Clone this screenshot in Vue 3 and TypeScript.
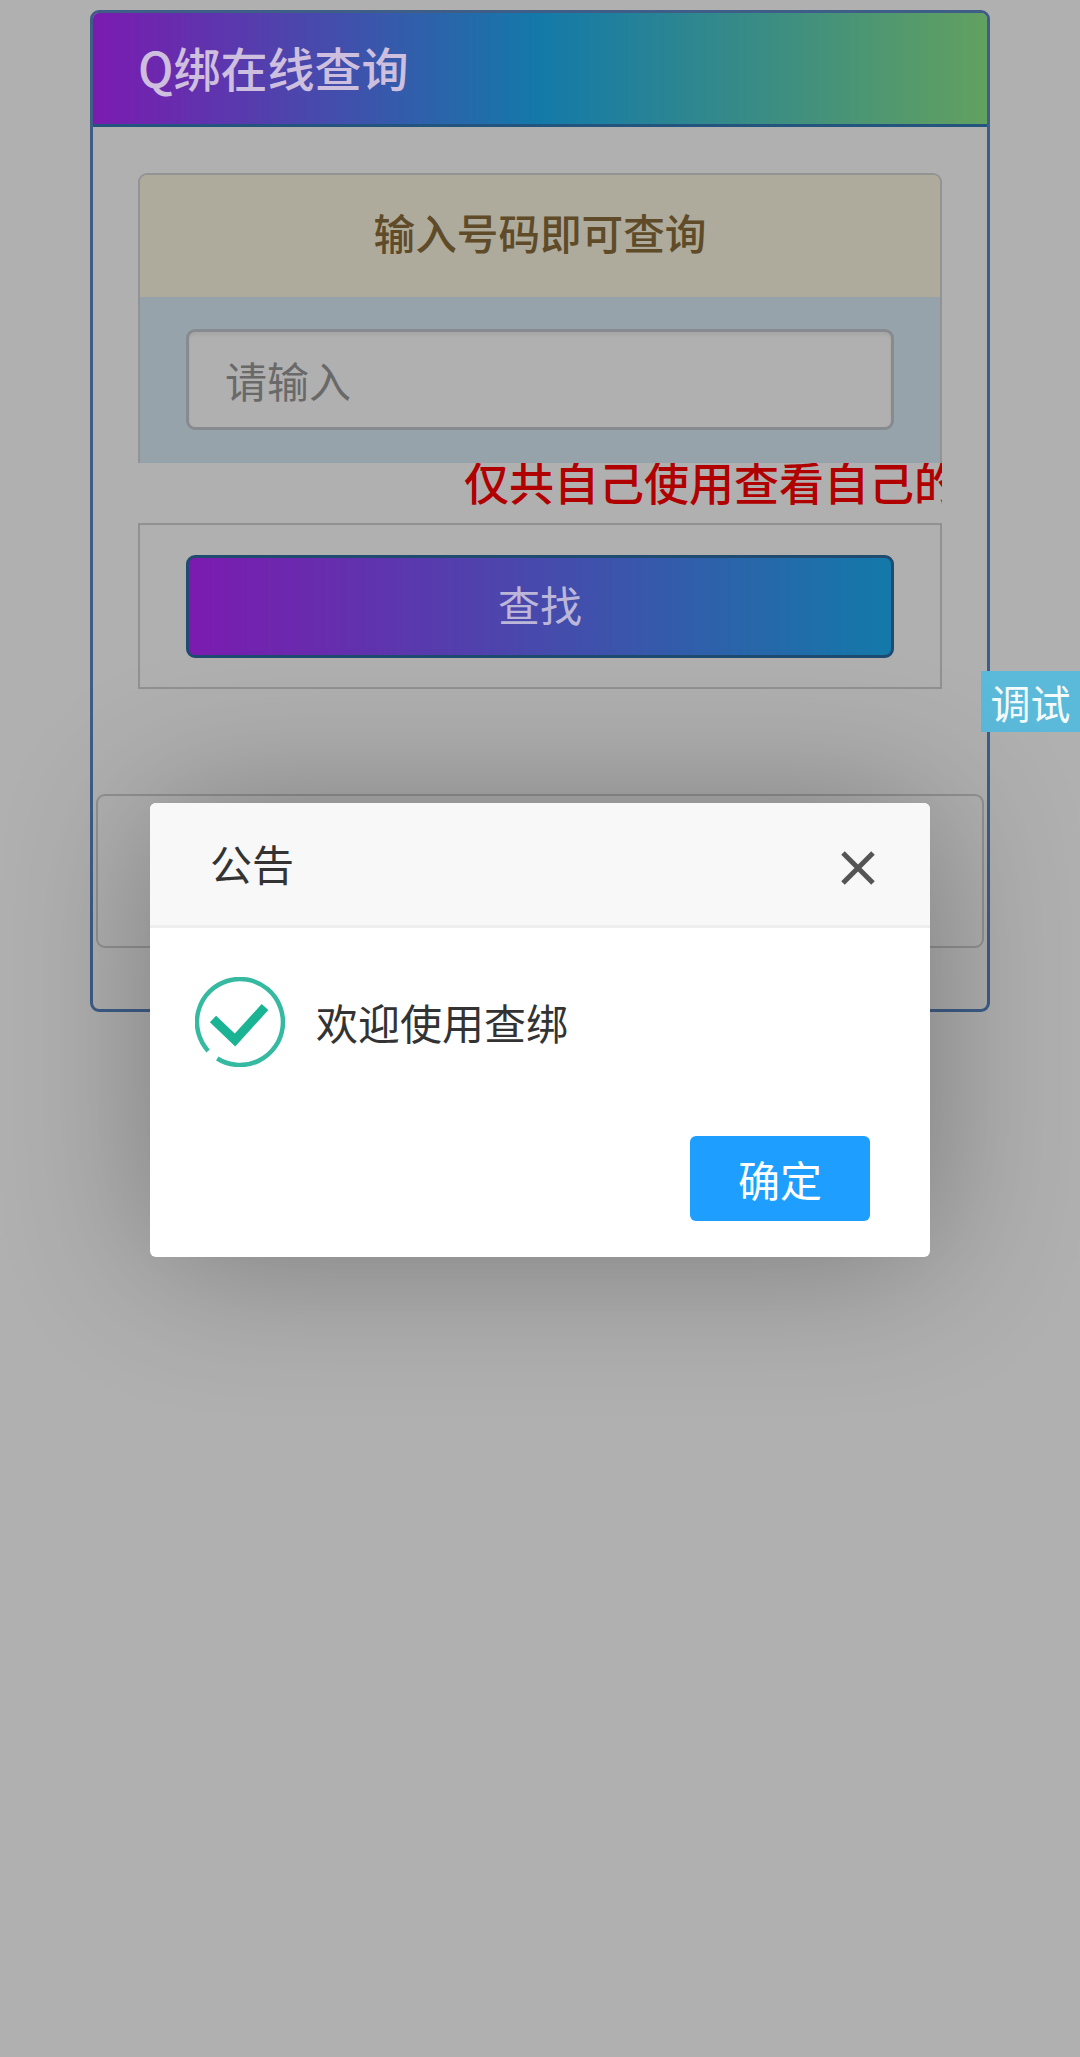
<script setup lang="ts">
const title = 'Q绑在线查询'
const notice = '仅共自己使用查看自己的'
</script>

<template>
  <div class="page">
    <section class="panel">
      <header class="panel-head"><span class="lifted title">{{ title }}</span></header>
      <div class="panel-body">
        <div class="query-card">
          <h2 class="query-title">输入号码即可查询</h2>
          <div class="query-input">
            <input class="input" type="text" placeholder="请输入" />
          </div>
        </div>
        <div class="marquee"><span>{{ notice }}</span></div>
        <div class="action-box">
          <button class="find-btn" type="button"><span class="lifted find-label">查找</span></button>
        </div>
      </div>
      <div class="result-box"></div>
    </section>

    <div class="debug">调试</div>
    <div class="shade"></div>

    <div class="dialog">
      <div class="dialog-head">
        <span class="dialog-title">公告</span>
        <svg class="close" viewBox="0 0 34 34" aria-hidden="true">
          <path d="M2 2 L32 32 M32 2 L2 32" />
        </svg>
      </div>
      <div class="dialog-body">
        <svg class="ok-icon" viewBox="0 0 90 90" aria-hidden="true">
          <path class="ring" d="M13.1 73.9 A43 43 0 1 1 22.2 81.5" />
          <path class="tick" d="M18 42 L40 63 L70 30" />
        </svg>
        <span>欢迎使用查绑</span>
      </div>
      <div class="dialog-foot">
        <button class="ok-btn" type="button">确定</button>
      </div>
    </div>
  </div>
</template>

<style scoped>
.page {
  position: relative;
  min-height: 2057px;
  padding: 10px 90px 0 90px;
  box-sizing: border-box;
  font-family: "Noto Sans CJK SC", "Liberation Sans", sans-serif;
}
.lifted {
  position: relative;
  z-index: 3;
}
.panel {
  border: 3px solid #5a88c4;
  border-radius: 9px;
  padding-bottom: 61px;
  box-sizing: border-box;
}
.panel-head {
  height: 114px;
  box-sizing: border-box;
  padding: 0 0 4px 45px;
  display: flex;
  align-items: center;
  background: linear-gradient(to right, #b327ff 0%, #1cb0f5 50%, #8ee98a 100%);
  border-bottom: 3px solid #337ab7;
  border-radius: 6px 6px 0 0;
}
.title {
  font-size: 47px;
  font-weight: 500;
  color: #cdbfdd;
}
.panel-body {
  padding: 46px 45px 0;
}
.query-card {
  border: 2px solid #d6d6d6;
  border-bottom: 0;
  border-radius: 9px 9px 0 0;
  overflow: hidden;
}
.query-title {
  margin: 0;
  height: 122px;
  box-sizing: border-box;
  padding-bottom: 9px;
  display: flex;
  align-items: center;
  justify-content: center;
  font-size: 41.6px;
  font-weight: 500;
  color: #8a6d3b;
  background: #fcf8e3;
}
.query-input {
  background: #d9edf7;
  padding: 32px 46px 33px;
}
.input {
  display: block;
  width: 100%;
  height: 101px;
  box-sizing: border-box;
  border: 3px solid #c4c8cf;
  border-radius: 9px;
  padding: 0 36px;
  font: inherit;
  font-size: 42px;
  background: #fff;
  box-shadow: inset 0 3px 3px rgba(0, 0, 0, 0.06);
  outline: none;
}
.input::placeholder {
  color: #999;
}
.marquee {
  height: 60px;
  padding-left: 326px;
  overflow: hidden;
  white-space: nowrap;
  font-size: 45px;
  line-height: 37px;
  font-weight: 500;
  color: #ff0000;
}
.action-box {
  border: 2px solid #d2d2d2;
  padding: 30px 46px 29px;
}
.find-btn {
  display: block;
  width: 100%;
  height: 103px;
  padding: 0 0 6px;
  border: 3px solid #2e6da4;
  border-radius: 9px;
  font: inherit;
  font-size: 42px;
  background: linear-gradient(to right, #b327ff, #1cb0f5);
}
.find-label {
  color: #bcb6d8;
}
.result-box {
  height: 154px;
  margin: 105px 3px 0;
  border: 2px solid #d2d2d2;
  border-radius: 9px;
  box-sizing: border-box;
}
.debug {
  position: absolute;
  z-index: 3;
  top: 671px;
  right: 0;
  width: 99px;
  height: 61px;
  display: flex;
  align-items: center;
  justify-content: center;
  font-size: 40px;
  color: #f4fbfd;
  background: #5bb9d9;
}
.shade {
  position: absolute;
  z-index: 2;
  inset: 0;
  background: rgba(0, 0, 0, 0.31);
}
.dialog {
  position: absolute;
  z-index: 4;
  left: 150px;
  top: 803px;
  width: 780px;
  height: 454px;
  background: #fff;
  border-radius: 6px;
  box-shadow: 3px 3px 150px rgba(0, 0, 0, 0.3);
  overflow: hidden;
}
.dialog-head {
  height: 125px;
  box-sizing: border-box;
  padding: 0 55px 0 60px;
  display: flex;
  align-items: center;
  justify-content: space-between;
  font-size: 42px;
  color: #333;
  background: #f8f8f8;
  border-bottom: 3px solid #eee;
}
.dialog-title {
  padding-bottom: 3px;
}
.close {
  width: 34px;
  height: 34px;
  margin-top: 8px;
}
.close path {
  fill: none;
  stroke: #555;
  stroke-width: 5;
}
.dialog-body {
  height: 208px;
  padding: 49px 0 0 45px;
  box-sizing: border-box;
  display: flex;
  align-items: flex-start;
  gap: 31px;
  font-size: 42px;
  line-height: 90px;
  color: #333;
}
.ok-icon {
  width: 90px;
  height: 90px;
  flex: none;
}
.ring {
  fill: none;
  stroke: #35b9a0;
  stroke-width: 4.5;
}
.tick {
  fill: none;
  stroke: #1ab394;
  stroke-width: 9;
}
.dialog-foot {
  display: flex;
  justify-content: flex-end;
  padding-right: 60px;
}
.ok-btn {
  width: 180px;
  height: 85px;
  padding: 0;
  border: 0;
  border-radius: 6px;
  font: inherit;
  font-size: 42px;
  color: #fff;
  background: #1e9fff;
}
</style>

<style>
html,
body {
  background: #fff;
}
</style>
